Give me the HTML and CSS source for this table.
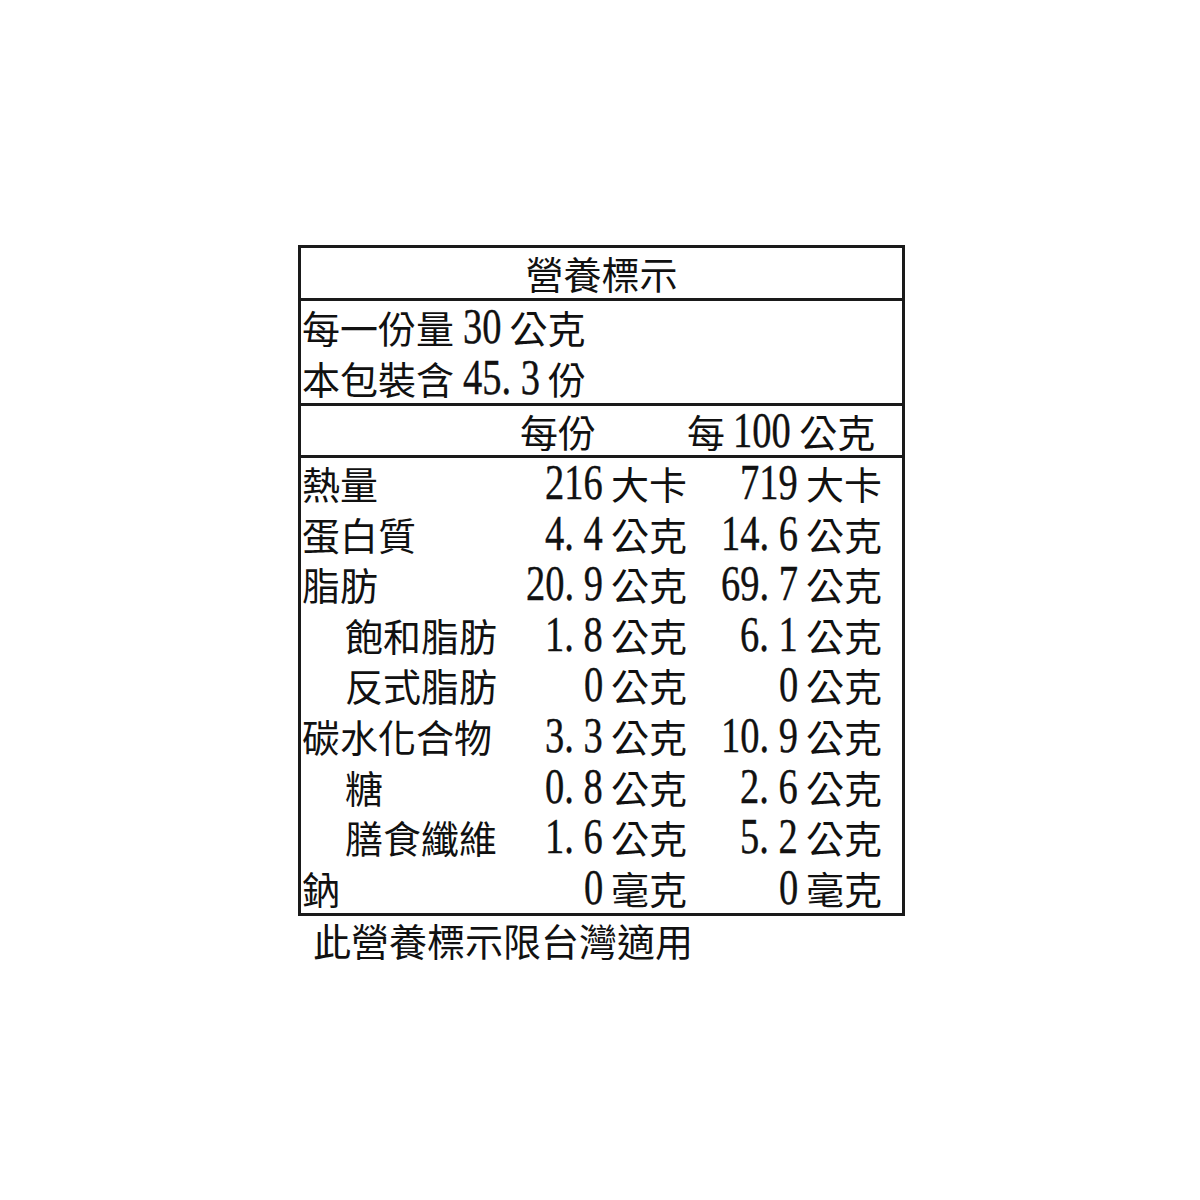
FILE: index.html
```html
<!DOCTYPE html>
<html lang="zh-Hant">
<head>
<meta charset="utf-8">
<title>營養標示</title>
<link rel="stylesheet" href="styles.css">
</head>
<body>
<div class="page">
  <div class="label">
    <div class="title">營養標示</div>
    <div class="serving">
      <div class="line">每一份量 <span class="num n2">30</span> 公克</div>
      <div class="line">本包裝含 <span class="num n4">45<span class="dot">.</span>3</span> 份</div>
    </div>
    <div class="head">
      <div class="h1">每份</div>
      <div class="h2">每<span class="num n3 gap">100</span> 公克</div>
    </div>
    <div class="rows">
      <div class="row"><div class="name">熱量</div><div class="v"><span class="num n3">216</span></div><div class="u">大卡</div><div class="v"><span class="num n3">719</span></div><div class="u">大卡</div></div>
      <div class="row"><div class="name">蛋白質</div><div class="v"><span class="num n3">4<span class="dot">.</span>4</span></div><div class="u">公克</div><div class="v"><span class="num n4">14<span class="dot">.</span>6</span></div><div class="u">公克</div></div>
      <div class="row"><div class="name">脂肪</div><div class="v"><span class="num n4">20<span class="dot">.</span>9</span></div><div class="u">公克</div><div class="v"><span class="num n4">69<span class="dot">.</span>7</span></div><div class="u">公克</div></div>
      <div class="row"><div class="name sub">飽和脂肪</div><div class="v"><span class="num n3">1<span class="dot">.</span>8</span></div><div class="u">公克</div><div class="v"><span class="num n3">6<span class="dot">.</span>1</span></div><div class="u">公克</div></div>
      <div class="row"><div class="name sub">反式脂肪</div><div class="v"><span class="num n1">0</span></div><div class="u">公克</div><div class="v"><span class="num n1">0</span></div><div class="u">公克</div></div>
      <div class="row"><div class="name">碳水化合物</div><div class="v"><span class="num n3">3<span class="dot">.</span>3</span></div><div class="u">公克</div><div class="v"><span class="num n4">10<span class="dot">.</span>9</span></div><div class="u">公克</div></div>
      <div class="row"><div class="name sub">糖</div><div class="v"><span class="num n3">0<span class="dot">.</span>8</span></div><div class="u">公克</div><div class="v"><span class="num n3">2<span class="dot">.</span>6</span></div><div class="u">公克</div></div>
      <div class="row"><div class="name sub">膳食纖維</div><div class="v"><span class="num n3">1<span class="dot">.</span>6</span></div><div class="u">公克</div><div class="v"><span class="num n3">5<span class="dot">.</span>2</span></div><div class="u">公克</div></div>
      <div class="row"><div class="name">鈉</div><div class="v"><span class="num n1">0</span></div><div class="u">毫克</div><div class="v"><span class="num n1">0</span></div><div class="u">毫克</div></div>
    </div>
  </div>
  <div class="note">此營養標示限台灣適用</div>
</div>
</body>
</html>
```

FILE: styles.css
```css
html, body {
  margin: 0;
  padding: 0;
  background: #ffffff;
}

body {
  font-family: "Noto Sans CJK TC", "Noto Sans CJK SC", sans-serif;
  font-size: 38px;
  color: #111111;
}

.page {
  padding-top: 245px;
  padding-left: 298px;
}

.label {
  width: 601px;
  border: 3px solid #1a1a1a;
}

.title {
  height: 50px;
  line-height: 50px;
  text-align: center;
  border-bottom: 3px solid #1a1a1a;
}

.serving {
  height: 102px;
  border-bottom: 3px solid #1a1a1a;
  padding-left: 1px;
}

.serving .line {
  height: 51px;
  line-height: 51px;
  white-space: nowrap;
}

.head {
  display: grid;
  grid-template-columns: 209px 93px 84px 111px 84px 1fr;
  height: 49px;
  line-height: 49px;
  border-bottom: 3px solid #1a1a1a;
}

.h1 {
  grid-column: 2 / 3;
  text-align: right;
  padding-right: 7px;
  white-space: nowrap;
}

.h2 {
  grid-column: 4 / 6;
  text-align: right;
  padding-right: 9px;
  white-space: nowrap;
}

.rows {
  display: flex;
  flex-direction: column;
}

.row {
  display: grid;
  grid-template-columns: 209px 93px 84px 111px 84px 1fr;
  height: 50.6px;
  line-height: 50.6px;
  white-space: nowrap;
}

.name {
  padding-left: 1px;
}

.name.sub {
  padding-left: 44px;
}

.v {
  text-align: right;
}

.u {
  padding-left: 8px;
}

.num {
  display: inline-block;
  font-family: "Liberation Serif", serif;
  font-size: 50px;
  line-height: 10px;
  -webkit-text-stroke: 0.4px #111111;
  transform: scaleX(0.77);
  transform-origin: left center;
}

.n1 { margin-right: -0.115em; }
.n2 { margin-right: -0.23em; }
.n3 { margin-right: -0.345em; }
.n4 { margin-right: -0.46em; }

.gap {
  margin-left: 8px;
}

.dot {
  display: inline-block;
  width: 0.5em;
  text-align: left;
}

.note {
  padding-left: 15px;
  height: 48px;
  line-height: 48px;
}
```
